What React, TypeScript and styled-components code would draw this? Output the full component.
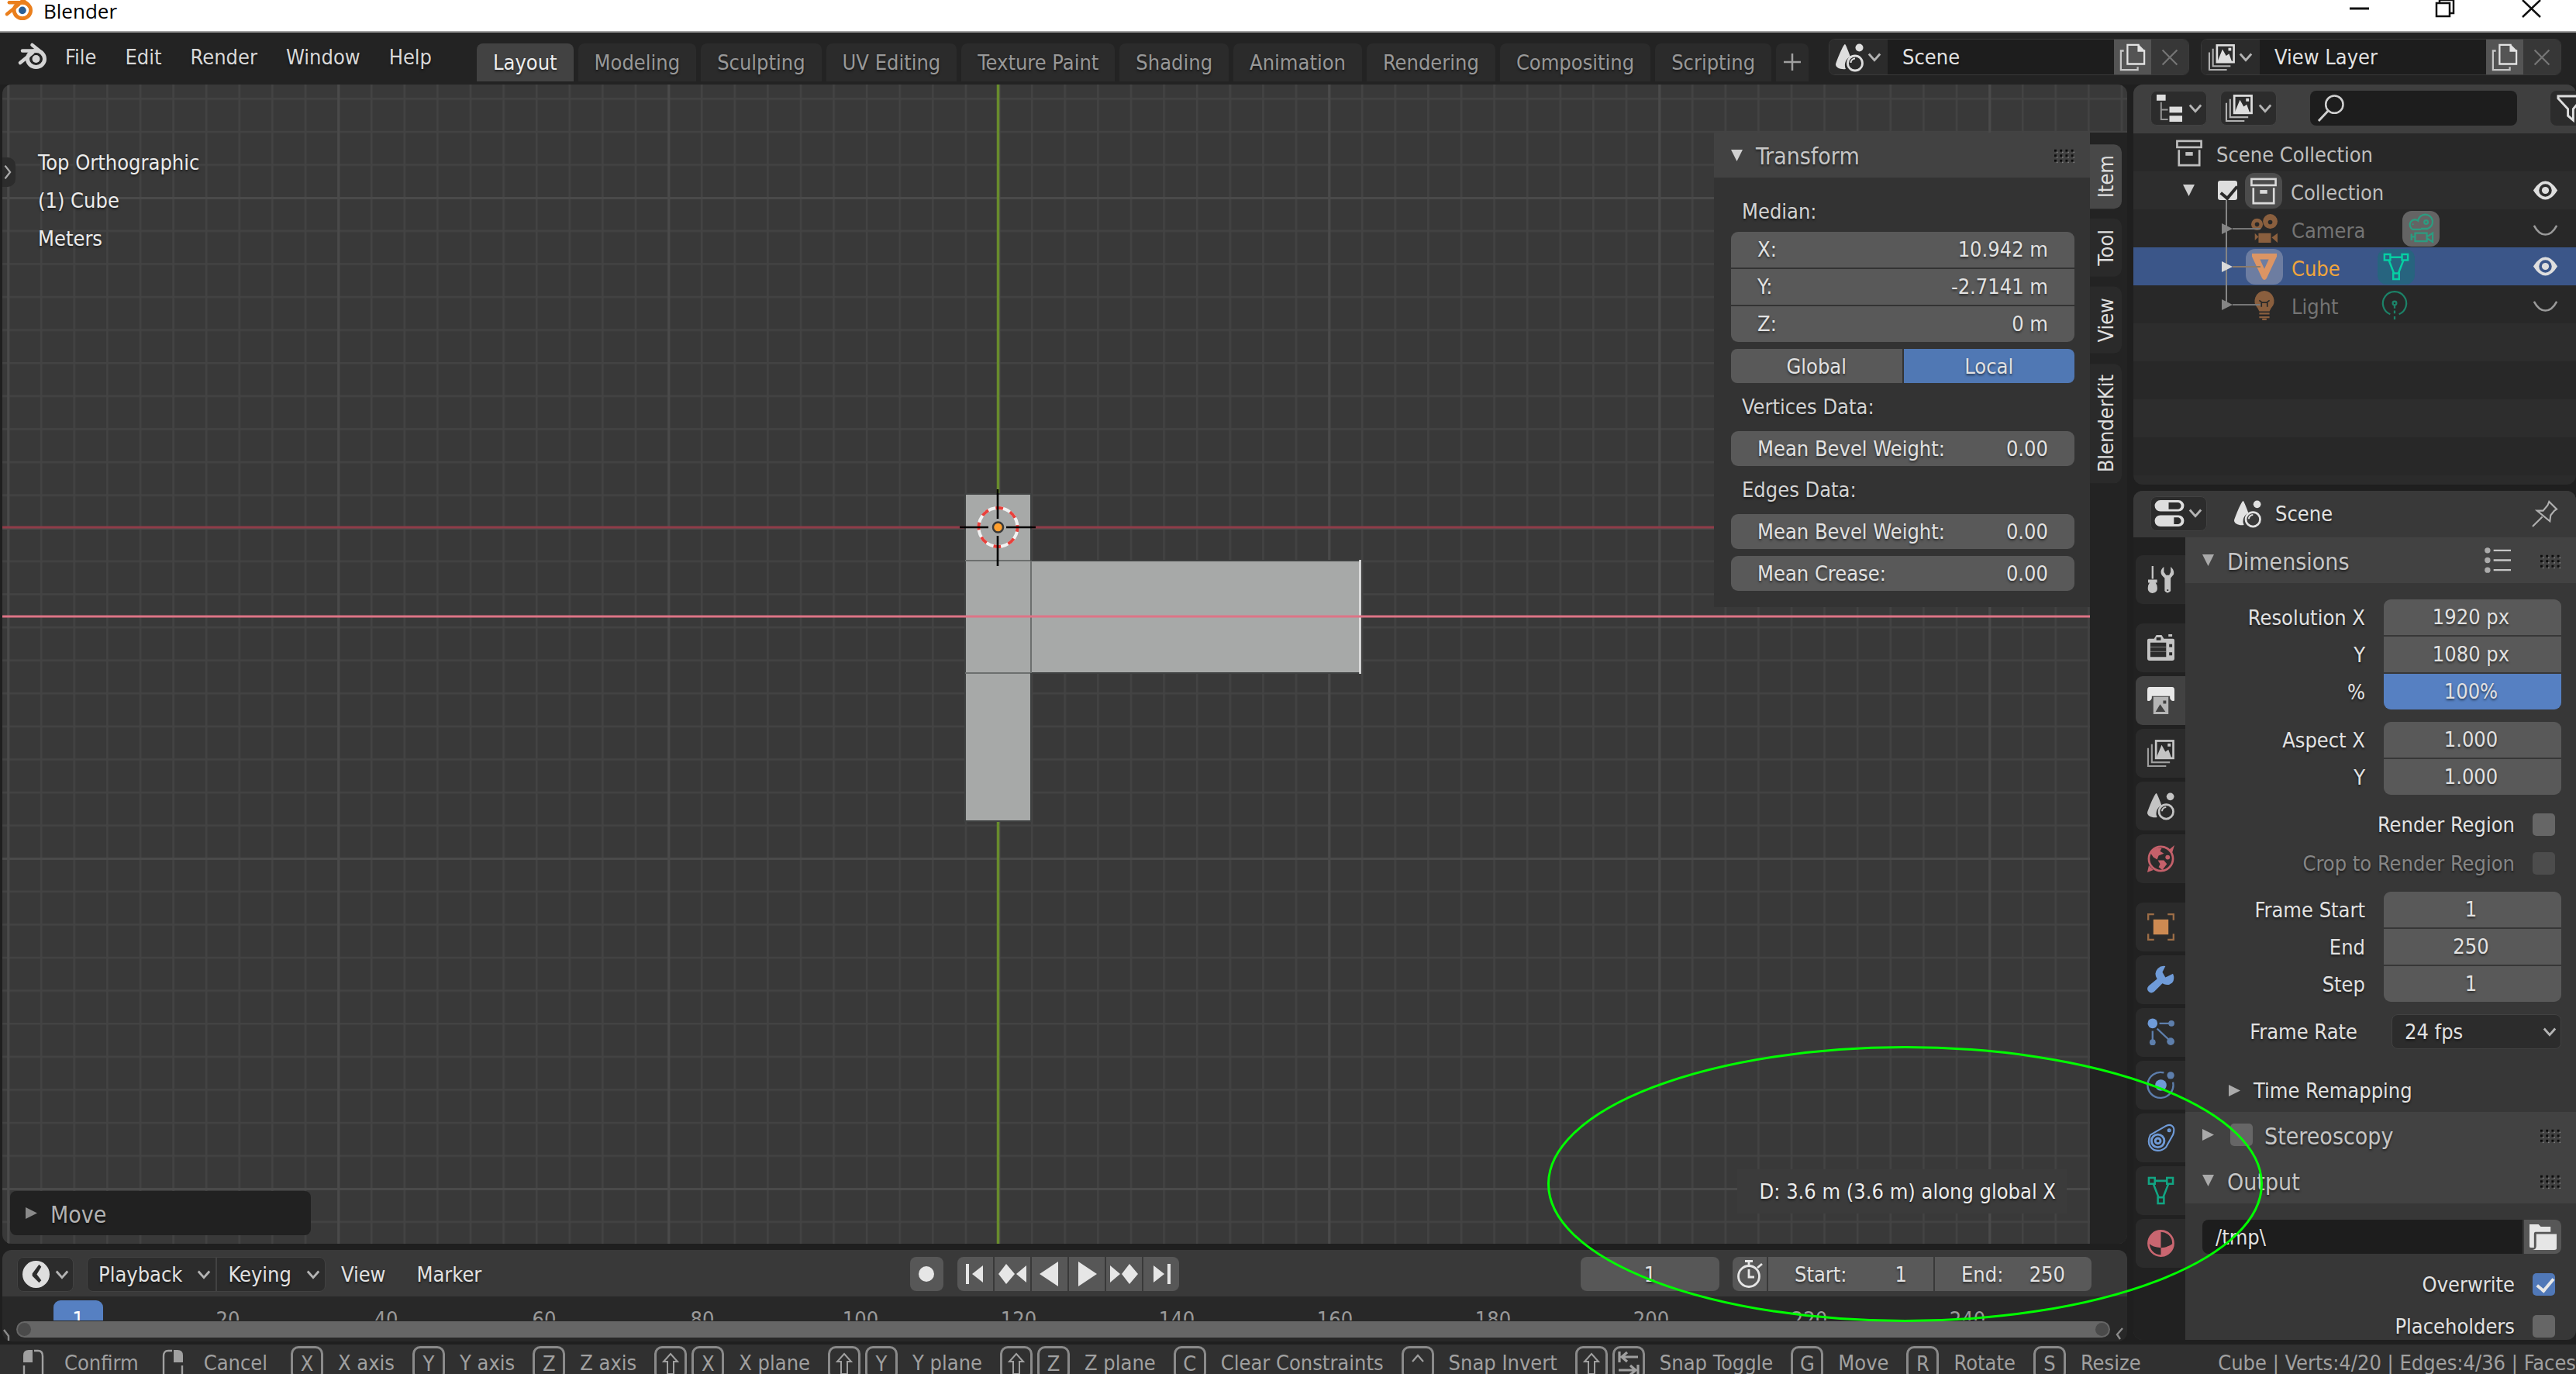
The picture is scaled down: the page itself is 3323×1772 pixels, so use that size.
import React from "react";
import styled, { createGlobalStyle, css } from "styled-components";

const Global = createGlobalStyle`
  * { box-sizing: border-box; }
  body { margin: 0; background: #232323; }
  body, button, input, select {
    font-family: "DejaVu Sans Condensed", "DejaVu Sans", sans-serif;
    font-size: 27px;
    color: #e2e2e2;
  }
  button { border: 0; padding: 0; margin: 0; background: none; }
  ul { list-style: none; margin: 0; padding: 0; }
`;

const textShadow = css`
  text-shadow: 0 2px 3px rgba(0, 0, 0, 0.55);
`;

/* ---------- Icons ---------- */

const Svg = styled.svg<{ $size?: number }>`
  width: ${(p) => p.$size ?? 36}px;
  height: ${(p) => p.$size ?? 36}px;
  flex: none;
  display: block;
  overflow: visible;
  fill: currentColor;
`;

type IconProps = { size?: number };
const icon = (body: React.ReactNode) =>
  function Icon({ size }: IconProps) {
    return (
      <Svg viewBox="0 0 36 36" $size={size} aria-hidden="true">
        {body}
      </Svg>
    );
  };
const line = { fill: "none", stroke: "currentColor", strokeWidth: 2.4 } as const;

const Logo = ({ size = 38, pupil }: { size?: number; pupil?: string }) => (
  <Svg viewBox="0 0 38 38" $size={size} aria-hidden="true">
    <g fill="none" stroke="currentColor" strokeLinecap="round">
      <ellipse cx="23.500" cy="22" rx="11" ry="10.500" strokeWidth="5" />
      <path d="M18.500 4 L31 14" strokeWidth="4.500" />
      <path d="M6 11.500 H24" strokeWidth="4.500" />
      <path d="M3 27 L19 14" strokeWidth="4.500" />
    </g>
    <circle cx="23.500" cy="22" r="5" fill={pupil ?? "currentColor"} />
  </Svg>
);
const SceneIcon = icon(
  <>
    <path d="M12 1 C13 1 17 12 19 17 A12 12 0 0 0 13 33 C6 34 0 31 0 27 C2 20 10 1 12 1Z" />
    <circle cx="30.500" cy="5.500" r="5" />
    <circle cx="25" cy="25.500" r="9.500" {...line} strokeWidth={2.800} />
    <path d="M19.500 25 A5.500 5.500 0 0 1 25 19.500" {...line} strokeWidth={2} />
  </>
);
const LayersIcon = icon(
  <>
    <path d="M1 11 V35 H25 M6 6 V30 H30" {...line} strokeWidth={2.200} opacity={0.75} />
    <rect x="11.500" y="1.500" width="23" height="23" {...line} strokeWidth={2.800} />
    <path d="M12 24 L19 7 L24 16 L28 13 L32 24Z" />
    <rect x="27" y="5" width="4" height="4" />
  </>
);
const CopyIcon = icon(
  <>
    <path d="M11 1 H26 V9 H34 V27 H11Z" {...line} />
    <path d="M26 0 L35 9 H26Z" />
    <path d="M6 9 H2 V35 H25 V31" {...line} opacity={0.8} />
  </>
);
const CrossIcon = icon(<path d="M8 8 L28 28 M28 8 L8 28" {...line} />);
const TreeIcon = icon(
  <>
    <rect x="1" y="0" width="12" height="8" />
    <path d="M7 10 V33 H16 M7 20 H16" {...line} strokeWidth={2} opacity={0.6} />
    <rect x="18" y="16" width="17" height="8" />
    <rect x="18" y="28" width="17" height="8" />
  </>
);
const SearchIcon = icon(
  <>
    <circle cx="23" cy="13" r="11.500" {...line} strokeWidth={2.600} />
    <path d="M15 21 L2 35" {...line} strokeWidth={3} />
  </>
);
const FilterIcon = icon(<path d="M2 2 H34 V5 L22 19 V34 L15 28 V19 L2 5Z" {...line} strokeWidth={3} />);
const BoxIcon = icon(
  <>
    <rect x="1.500" y="2" width="33" height="8.500" {...line} strokeWidth={2.800} />
    <path d="M4 14 V35 H32 V14" {...line} strokeWidth={2.800} />
    <rect x="13" y="17" width="10" height="5" />
  </>
);
const CameraIcon = icon(
  <>
    <path fillRule="evenodd" d="M26 -2a10 10 0 1 1 0 20a10 10 0 1 1 0-20Z M26 6a3 3 0 1 0 0 6a3 3 0 1 0 0-6Z M8 4a8 8 0 1 1 0 16a8 8 0 1 1 0-16Z M8 9a3 3 0 1 0 0 6a3 3 0 1 0 0-6Z" />
    <path d="M10 24 H27 V37 H10Z M28 30 L36 24 V37Z M5 24 L10 29 L5 34Z" />
  </>
);
const CameraDataIcon = icon(
  <>
    <path d="M18 19 H7 A7 7 0 1 1 14 7 A10 10 0 1 1 27 18 H18" {...line} />
    <circle cx="25" cy="9" r="2.500" {...line} />
    <circle cx="7" cy="12" r="1.200" />
    <path d="M10 24 H26 V35 H10Z M26 29 L34 24 V36 L26 31 M5 25 V34 M5 29 H10" {...line} />
  </>
);
const MeshIcon = icon(<path fillRule="evenodd" d="M1 0 H35 V4 L21 34 Q18 38 15 34 L1 4Z M12 8 L18 21 L24 8Z" />);
const MeshDataIcon = icon(
  <g {...line} strokeWidth={2.600}>
    <rect x="2" y="1" width="8" height="8" />
    <rect x="26" y="1" width="8" height="8" />
    <rect x="14" y="27" width="8" height="8" />
    <path d="M10 5 H26 M8 9 L15 27 M28 9 L21 27" />
  </g>
);
const BulbIcon = icon(
  <>
    <path d="M18 -1 A14 14 0 0 1 27 23 L25 27 H11 L9 23 A14 14 0 0 1 18 -1Z" />
    <path d="M11 12 L15 15 H21 L25 12 M14 15 V21 M22 15 V21" {...line} stroke="#282828" strokeWidth={1.800} />
    <path d="M11 30 H25 M11 35 H25 M15 38 H21" {...line} />
  </>
);
const BulbDataIcon = icon(
  <>
    <path d="M12 31 A16 16 0 1 1 24 31" {...line} />
    <circle cx="18" cy="16" r="2.500" {...line} />
    <path d="M18 19 V23 M18 26 V30 M18 34 V38" {...line} />
  </>
);
const EyeIcon = icon(
  <>
    <path fillRule="evenodd" d="M1 18 Q9 5 18 5 Q27 5 35 18 Q27 31 18 31 Q9 31 1 18Z M18 9a9 9 0 1 0 0 18a9 9 0 1 0 0-18Z" />
    <circle cx="18" cy="18" r="5" />
  </>
);
const EyeClosedIcon = icon(<path d="M2 14 C11 31 25 31 34 14" {...line} strokeWidth={2.800} />);
const TogglesIcon = icon(
  <>
    <path fillRule="evenodd" d="M6 0 H30 A6 6 0 0 1 30 15 H6 A6 6 0 0 1 6 0Z M17 3 V12 H29 A4.500 4.500 0 0 0 29 3Z" />
    <path fillRule="evenodd" d="M6 20 H30 A6 6 0 0 1 30 35 H6 A6 6 0 0 1 6 20Z M24 23 V32 H29 A4.500 4.500 0 0 0 29 23Z" />
  </>
);
const PinIcon = icon(
  <path d="M24 2 L34 12 L31 14 L26 20 L25 28 L8 14 L16 14 L22 7Z M15 22 L2 35" {...line} stroke="#b0b0b0" strokeWidth={2.200} />
);
const ToolsIcon = icon(
  <>
    <path d="M7 0 V17" {...line} />
    <path d="M1 18 H13 V22 H11 Q14 26 13 32 Q11 36 7 36 Q3 36 1 32 Q0 26 3 22 H1Z" />
    <path fillRule="evenodd" d="M22 1 V8 L25 12 H29 L31 8 V1 Q36 5 35 11 L31 16 V33 Q27 38 23 33 V16 Q18 12 18 8 Q18 4 22 1Z M26 31 h2 v2 h-2Z" />
  </>
);
const RenderIcon = icon(
  <>
    <path fillRule="evenodd" d="M2 6 H9 L12 1 H19 L22 6 H34 Q36 6 36 8 V32 Q36 35 33 35 H3 Q0 35 0 32 V8 Q0 6 2 6Z M4 11 V30 H25 V11Z M12 4 V8 H18 V4Z M29 13 v4 h4 v-4Z M29 24 v4 h4 v-4Z" />
    <path d="M4 17 H25 M4 23 H25" {...line} strokeWidth={1.500} opacity={0.4} />
    <rect x="28" y="0" width="5" height="3" />
  </>
);
const PrinterIcon = icon(
  <>
    <path d="M3 0 H33 Q36 0 36 4 V18 Q32 20 30 15 V12 H6 V15 Q4 20 0 18 V4 Q0 0 3 0Z" fill="#e8e8e8" />
    <path fillRule="evenodd" d="M8 13 H28 V36 H8Z M11 33 H24 L17 23Z M21 18 v4 h4 v-4Z" fill="#b5b5b5" />
  </>
);
const WorldIcon = icon(
  <>
    <circle cx="18" cy="18" r="16" {...line} strokeWidth={2.800} />
    <path d="M4 10 Q10 2 19 4 L17 8 L22 11 L15 14 L13 19 L8 16Z M14 20 L22 20 L26 25 L20 33 L15 29 L17 25Z M29 6 L36 0 L33 10Z M0 36 L2 27 L8 33Z" />
    <circle cx="27" cy="16" r="3" />
  </>
);
const ObjectIcon = icon(
  <>
    <rect x="8" y="8" width="20" height="20" />
    <path d="M1.200 9 V1.200 H9 M27 1.200 H34.800 V9 M34.800 27 V34.800 H27 M9 34.800 H1.200 V27" {...line} opacity={0.7} />
  </>
);
const WrenchIcon = icon(
  <path d="M24 0 L20 8 L24 15 L34 10 Q37 17 33 22 Q27 27 20 23 L9 34 Q5 37 2 34 Q-2 30 2 26 L13 17 Q8 9 14 3 Q18 -1 24 0Z" />
);
const ParticlesIcon = icon(
  <>
    <circle cx="7" cy="6" r="6.500" />
    <g opacity={0.75}>
      <circle cx="32" cy="6" r="4" />
      <circle cx="31" cy="30" r="5" />
      <circle cx="7" cy="31" r="4" />
      <path d="M16 6 H32 M7 16 V31 M13 13 L31 30" {...line} />
    </g>
  </>
);
const PhysicsIcon = icon(
  <>
    <circle cx="18" cy="18" r="7.500" />
    <circle cx="31" cy="5" r="4.800" opacity={0.75} />
    <path d="M22 1.500 A17 17 0 1 0 34 14" {...line} opacity={0.75} />
  </>
);
const ConstraintIcon = icon(
  <g {...line} strokeWidth={2.200}>
    <path d="M4 14 L25 2 Q32 -1 35 5 Q36 9 34 14 L25 30 Q18 37 9 34 Q-2 27 4 14Z" />
    <circle cx="14" cy="22" r="8.500" strokeWidth={3} />
    <circle cx="14" cy="22" r="3.500" strokeWidth={3} />
    <circle cx="29" cy="8" r="1.500" />
  </g>
);
const MaterialIcon = icon(
  <>
    <circle cx="18" cy="18" r="16.500" {...line} strokeWidth={2.800} />
    <path d="M18 1 V24 Q7 23 2 18 Q3 3 18 1Z M18 24 Q29 23 34 18 Q33 33 18 35Z" />
  </>
);
const PresetIcon = icon(
  <>
    <circle cx="4" cy="5" r="3.800" opacity={0.8} />
    <circle cx="4" cy="18" r="3.800" opacity={0.8} />
    <circle cx="4" cy="31" r="3.800" opacity={0.8} />
    <path d="M12 5 H35 M12 18 H35 M12 31 H35" {...line} />
  </>
);
const FolderIcon = icon(
  <>
    <path d="M0 1 H12 L15 4 H28 V11 H8 Q6 11 6 14 V32 H2 Q0 32 0 30Z" />
    <path d="M9 14 H36 V33 Q36 35 33 35 H4 Q9 34 9 30Z" />
  </>
);
const ClockIcon = icon(
  <path fillRule="evenodd" d="M18 0a18 18 0 1 1 0 36a18 18 0 1 1 0-36Z M22 5 L13 17 V20 L22 29 L25 26 L19 18 L25 8Z" />
);
const StopwatchIcon = icon(
  <>
    <circle cx="17" cy="21" r="13.500" {...line} strokeWidth={2.800} />
    <path d="M12 1.500 H22 M17 1 V8 M17 12 V22 H24 M28 10 L34 5" {...line} strokeWidth={2.800} />
  </>
);
const RecordIcon = icon(<circle cx="18" cy="18" r="10" />);
const FirstIcon = icon(<path d="M6 5 H10 V31 H6Z M28 7 V29 L14 18Z" />);
const PrevKeyIcon = icon(<path d="M0 18 L10 5 L21 18 L10 31Z M36 7 V29 L23 18Z" />);
const PlayBackIcon = icon(<path d="M29 2 V34 L5 18Z" />);
const PlayIcon = icon(<path d="M7 2 V34 L31 18Z" />);
const NextKeyIcon = icon(<path d="M0 7 V29 L13 18Z M15 18 L25 5 L36 18 L25 31Z" />);
const LastIcon = icon(<path d="M8 7 V29 L22 18Z M26 5 H30 V31 H26Z" />);
const ShiftIcon = icon(<path d="M18 6 L27 16 H22 V32 H14 V16 H9Z" {...line} strokeWidth={2} />);
const TabIcon = icon(
  <path d="M6 3 V17 M30 10 H9 M16 4 L9 10 L16 16 M30 20 V34 M5 27 H27 M20 21 L27 27 L20 33" {...line} strokeWidth={3.200} />
);
const CaretIcon = icon(<path d="M11 16 L18 8 L25 16" {...line} strokeWidth={2.200} />);

const Chevron = () => (
  <Svg viewBox="0 0 20 20" $size={18} aria-hidden="true">
    <path d="M2 5 L10 14 L18 5" fill="none" stroke="#b4b4b4" strokeWidth="3.200" />
  </Svg>
);
const Triangle = ({ open = false, color = "#aaaaaa" }) => (
  <Svg viewBox="0 0 16 16" $size={15} aria-hidden="true">
    <path d={open ? "M0 0 H16 L8 16Z" : "M0 0 L16 8 L0 16Z"} fill={color} />
  </Svg>
);
const Grip = () => (
  <Svg viewBox="0 0 36 36" $size={26} aria-hidden="true">
    {[8, 17, 26].map((y) =>
      [0, 10, 20, 30].map((x) => (
        <g key={`${x}-${y}`}>
          <rect x={x} y={y} width="4" height="4" fill="#0c0c0c" />
          <rect x={x + 4} y={y + 4} width="2" height="2" fill="#8a8a8a" />
        </g>
      ))
    )}
  </Svg>
);
const Mouse = ({ side }: { side: "left" | "right" }) => (
  <Svg viewBox="6 0 40 40" $size={40} aria-hidden="true">
    <g transform="translate(6 0)">
      <path d="M2 22 V34 Q2 40 8 40 H20 Q26 40 26 34 V22" {...line} />
      {side === "left" ? (
        <path d="M1 18 V9 Q1 2 8 2 H13 V18Z" />
      ) : (
        <path d="M27 18 V9 Q27 2 20 2 H15 V18Z" />
      )}
      <path d={side === "left" ? "M15 3 H20 Q26 3 26 10 V22" : "M13 3 H8 Q2 3 2 10 V22"} {...line} />
    </g>
  </Svg>
);

/* ---------- Frame ---------- */

const Page = styled.div`
  position: relative;
  display: flex;
  flex-direction: column;
  height: 100vh;
  overflow: hidden;
  background: #1f1f1f;
`;

const TitleBar = styled.header`
  display: flex;
  align-items: flex-start;
  height: 42px;
  background: #fff;
  border-bottom: 2px solid #a0a0a0;
  color: #000;
`;
const AppIcon = styled.span`
  display: flex;
  margin: -8px 13px 0 6px;
  color: #ea7f1d;
`;
const AppName = styled.span`
  font-family: "Open Sans", "Noto Sans", sans-serif;
  font-size: 26px;
  line-height: 28px;
`;
const WindowButtons = styled.div`
  display: flex;
  gap: 81px;
  margin-left: auto;
  padding-right: 43px;
`;
const WindowButton = styled.button`
  display: flex;
  color: #111;
`;

const TopBar = styled.nav`
  display: flex;
  height: 67px;
  padding: 8px 19px 0 23px;
  background: #232323;
  align-items: flex-start;
`;
const LogoButton = styled.button`
  display: flex;
  align-items: center;
  height: 46px;
  color: #d4d4d4;
  margin-right: 23px;
`;
const MenuButton = styled.button`
  ${textShadow}
  line-height: 47px;
  margin-right: 37px;
  color: #d8d8d8;
`;
const Tabs = styled.div`
  display: flex;
  gap: 6px;
  margin: 6px auto 0 21px;
`;
const Tab = styled.button<{ $active?: boolean }>`
  ${textShadow}
  height: 49px;
  padding: 0 21px;
  border-radius: 8px 8px 0 0;
  background: ${(p) => (p.$active ? "#424242" : "#2b2b2b")};
  color: ${(p) => (p.$active ? "#eeeeee" : "#989898")};
  white-space: nowrap;
`;
const AddTab = styled(Tab)`
  padding: 0 6px;
`;
const IdBlock = styled.div`
  display: flex;
  width: 465px;
  height: 47px;
  margin-left: 15px;
  border: 1px solid #3a3a3a;
  border-radius: 8px;
  overflow: hidden;
`;
const IdPicker = styled.button`
  display: flex;
  align-items: center;
  justify-content: center;
  gap: 5px;
  width: 75px;
  background: #2b2b2b;
  color: #dedede;
`;
const IdName = styled.input`
  ${textShadow}
  flex: 1;
  min-width: 0;
  border: 0;
  padding: 0 19px;
  background: #1d1d1d;
`;
const IdAction = styled.button<{ $dim?: boolean }>`
  display: flex;
  align-items: center;
  justify-content: center;
  width: 48px;
  background: ${(p) => (p.$dim ? "#373737" : "#545454")};
  color: ${(p) => (p.$dim ? "#757575" : "#e2e2e2")};
`;

const Workspace = styled.main`
  display: grid;
  grid-template-columns: minmax(0, 1fr) 571px;
  gap: 8px;
  flex: 1;
  min-height: 0;
  margin-bottom: 4px;
`;
const Column = styled.div`
  display: flex;
  flex-direction: column;
  gap: 8px;
  min-height: 0;
  min-width: 0;
`;

/* ---------- Viewport ---------- */

const Viewport = styled.section`
  position: relative;
  display: flex;
  flex: 1;
  min-height: 0;
  padding-top: 62px;
  margin-left: 3px;
  border-radius: 12px;
  overflow: hidden;
  background: #393939;
`;
const Canvas = styled.svg`
  position: absolute;
  inset: 0;
  width: 100%;
  height: 100%;
`;
const ViewInfo = styled.div`
  ${textShadow}
  position: relative;
  flex: 1;
  padding: 14px 0 0 46px;
  line-height: 49px;
  color: #ececec;
`;
const RegionToggle = styled.button`
  position: absolute;
  left: -3px;
  top: 94px;
  width: 20px;
  height: 38px;
  background: #2c2c2c;
  border-radius: 0 10px 10px 0;
`;
const SidePanel = styled.aside`
  position: relative;
  align-self: flex-start;
  width: 485px;
  background: #333333;
`;
const PanelHeader = styled.div<{ $height?: number }>`
  ${textShadow}
  display: flex;
  align-items: center;
  height: ${(p) => p.$height ?? 59}px;
  padding: 0 20px 0 22px;
  background: #424242;
  font-size: 30px;
  color: #c6c6c6;
`;
const PanelTitle = styled.span`
  margin-left: 17px;
  padding-top: 3px;
`;
const Spacer = styled.span`
  flex: 1;
`;
const SideBody = styled.div`
  padding: 18px 20px 21px 22px;
`;
const GroupLabel = styled.div<{ $height?: number }>`
  ${textShadow}
  padding-left: 14px;
  line-height: ${(p) => p.$height ?? 62}px;
  color: #d4d4d4;
`;
const Stack = styled.div`
  display: grid;
  gap: 2px;
  border-radius: 9px;
  overflow: hidden;
`;
const NumberField = styled.label<{ $height?: number; $gap?: number }>`
  ${textShadow}
  display: flex;
  align-items: center;
  height: ${(p) => p.$height ?? 46}px;
  padding: 0 34px 2px;
  background: #595959;
  white-space: nowrap;
`;
const RoundField = styled(NumberField)`
  height: 45px;
  padding: 0 34px;
  border-radius: 9px;
  margin-bottom: ${(p) => p.$gap ?? 0}px;
`;
const BareInput = styled.input<{ $align?: string }>`
  ${textShadow}
  flex: 1;
  min-width: 0;
  width: 100%;
  height: 100%;
  border: 0;
  padding: 0;
  background: none;
  text-align: ${(p) => p.$align ?? "right"};
`;
const Segmented = styled.div`
  display: grid;
  grid-template-columns: 1fr 1fr;
  gap: 2px;
  margin-top: 9px;
  border-radius: 8px;
  overflow: hidden;
`;
const Segment = styled.button<{ $active?: boolean }>`
  ${textShadow}
  height: 44px;
  background: ${(p) => (p.$active ? "#5078b4" : "#595959")};
`;
const SideTabs = styled.div`
  position: relative;
  display: flex;
  flex-direction: column;
  gap: 13px;
  width: 48px;
  padding: 15px 7px 0 0;
  background: #232323;
`;
const SideTab = styled.button<{ $active?: boolean }>`
  writing-mode: vertical-rl;
  rotate: 180deg;
  padding: 14px 0;
  line-height: 41px;
  border-radius: 10px 0 0 10px;
  background: ${(p) => (p.$active ? "#484848" : "#2a2a2a")};
  color: #dedede;
`;
const LastOperator = styled.button`
  ${textShadow}
  position: absolute;
  left: 10px;
  bottom: 11px;
  display: flex;
  align-items: center;
  width: 388px;
  height: 57px;
  padding-left: 20px;
  background: #212121;
  border-radius: 8px;
  font-size: 30px;
  color: #b2b2b2;
`;
const TransformTip = styled.div`
  ${textShadow}
  position: absolute;
  right: 78px;
  bottom: 39px;
  padding: 0 14px 0 29px;
  line-height: 57px;
  background: #3b3b3b;
  color: #ececec;
  white-space: nowrap;
`;

/* ---------- Timeline ---------- */

const Timeline = styled.section`
  height: 118px;
  margin-left: 3px;
  border-radius: 12px;
  overflow: hidden;
  background: #282828;
`;
const TimelineHeader = styled.div`
  display: grid;
  grid-template-columns: 1fr auto 1fr;
  height: 60px;
  padding: 9px 46px 0 19px;
  background: #393939;
`;
const HeaderGroup = styled.div<{ $end?: boolean }>`
  display: flex;
  justify-content: ${(p) => (p.$end ? "flex-end" : "flex-start")};
`;
const DarkButton = styled.button<{ $width: number; $ml?: number }>`
  ${textShadow}
  display: flex;
  align-items: center;
  justify-content: center;
  gap: 7px;
  width: ${(p) => p.$width}px;
  height: 45px;
  margin-left: ${(p) => p.$ml ?? 0}px;
  border: 1px solid #424242;
  border-radius: 8px;
  background: #2c2c2c;
  color: #dedede;
  flex: none;
`;
const MenuPair = styled.div`
  display: flex;
  margin-left: 17px;
  border: 1px solid #424242;
  border-radius: 8px;
  overflow: hidden;
  background: #424242;
  height: 45px;
  gap: 2px;
`;
const PairButton = styled.button`
  ${textShadow}
  display: flex;
  align-items: center;
  gap: 19px;
  padding: 0 6px 0 14px;
  background: #2c2c2c;
`;
const PlainMenu = styled.button`
  ${textShadow}
  height: 45px;
  margin-left: 20px;
  margin-right: 20px;
`;
const Transport = styled.div`
  display: flex;
  gap: 18px;
  margin-right: 26px;
`;
const ButtonStrip = styled.div`
  display: flex;
  gap: 2px;
  height: 44px;
  border-radius: 8px;
  overflow: hidden;
`;
const StripButton = styled.button<{ $width?: number }>`
  display: flex;
  align-items: center;
  justify-content: center;
  width: ${(p) => p.$width ?? 46}px;
  background: #575757;
  color: #e6e6e6;
`;
const FrameField = styled(NumberField)<{ $width: number }>`
  width: ${(p) => p.$width}px;
  height: 44px;
  padding: 0 34px;
`;
const CurrentFrame = styled.input`
  ${textShadow}
  width: 179px;
  height: 44px;
  margin-right: 17px;
  border: 0;
  border-radius: 8px;
  background: #575757;
  text-align: center;
`;
const Ruler = styled.div`
  position: relative;
  display: grid;
  grid-template-columns: repeat(12, 1fr);
  height: 31px;
  padding: 10px 104px 0 189px;
  overflow: hidden;
  line-height: 40px;
  text-align: center;
  color: #9a9a9a;
`;
const Playhead = styled.div`
  position: absolute;
  left: 66px;
  top: 5px;
  width: 64px;
  height: 40px;
  border-radius: 9px;
  background: #5680c2;
  color: #fff;
  line-height: 50px;
`;
const ScrollArea = styled.div`
  display: flex;
  align-items: center;
  justify-content: space-between;
  color: #8a8a8a;
`;
const ScrollTrack = styled.div`
  display: flex;
  flex: 1;
  align-items: center;
  justify-content: space-between;
  height: 21px;
  padding: 0 2px;
  border-radius: 11px;
  background: #666666;
`;
const Knob = styled.span`
  width: 17px;
  height: 17px;
  border-radius: 50%;
  background: #4a4a4a;
`;

/* ---------- Outliner ---------- */

const Outliner = styled.section`
  height: 516px;
  border-radius: 12px;
  overflow: hidden;
  background: #2b2b2b;
`;
const EditorHeader = styled.div<{ $height: number }>`
  ${textShadow}
  display: flex;
  align-items: center;
  height: ${(p) => p.$height}px;
  padding: 0 0 2px 22px;
  background: #393939;
`;
const OutlinerHeader = styled(EditorHeader)`
  background: #3f3f3f;
  padding-bottom: 2px;
`;
const SearchBox = styled.label`
  display: flex;
  align-items: center;
  width: 267px;
  height: 45px;
  margin-left: 43px;
  padding-left: 9px;
  border-radius: 8px;
  background: #1d1d1d;
  color: #d0d0d0;
`;
const FilterButton = styled.button`
  display: flex;
  flex: 1;
  align-items: center;
  height: 45px;
  margin-left: 43px;
  padding-left: 8px;
  border-radius: 8px 0 0 8px;
  background: #2c2c2c;
  color: #dedede;
  overflow: hidden;
`;
const TreeList = styled.ul`
  li:nth-child(odd) { background: #282828; }
  li:nth-child(even) { background: #2d2d2d; }
  li[aria-selected="true"] { background: #3b5689; }
`;
const TreeRow = styled.li<{ $indent: number; $dim?: boolean }>`
  display: flex;
  align-items: center;
  height: 49px;
  padding: 0 23px 0 ${(p) => p.$indent}px;
  color: ${(p) => (p.$dim ? "#747474" : "#bebebe")};
`;
const TreeIconBox = styled.span<{ $bg?: string; $color?: string; $ml?: number }>`
  display: flex;
  align-items: center;
  justify-content: center;
  width: 48px;
  height: 46px;
  margin-left: ${(p) => p.$ml ?? 0}px;
  border-radius: 12px;
  background: ${(p) => p.$bg ?? "transparent"};
  color: ${(p) => p.$color ?? "#dadada"};
`;
const TreeCheck = styled.label`
  display: flex;
  justify-content: center;
  width: 46px;
  margin-left: 19px;
`;
const TreeName = styled.span<{ $ml?: number; $active?: boolean }>`
  margin-left: ${(p) => p.$ml ?? 11}px;
  padding-top: 5px;
  ${(p) => p.$active && "color: #f0a53c;"}
`;
const VisibilityButton = styled.button<{ $dim?: boolean }>`
  display: flex;
  margin-left: auto;
  color: ${(p) => (p.$dim ? "#9a9a9a" : "#dedede")};
`;
const BranchSvg = styled.svg`
  flex: none;
  width: 31px;
  height: 49px;
  overflow: visible;
  position: relative;
`;
const Branch = ({ first = false, last = false, bright = false }) => (
  <BranchSvg aria-hidden="true">
    <path d={`M6 ${first ? -12 : 0} V${last ? 25 : 49}`} stroke="#858585" strokeWidth="2" />
    <path d="M14 25 H50" stroke={bright ? "#8a7a6a" : "#777777"} strokeWidth="2" />
    <path d="M0 18 L14 25 L0 32Z" fill={bright ? "#dadada" : "#858585"} />
  </BranchSvg>
);

/* ---------- Properties ---------- */

const Properties = styled.section`
  display: flex;
  flex-direction: column;
  flex: 1;
  min-height: 0;
  margin-bottom: 2px;
  border-radius: 12px;
  overflow: hidden;
  background: #373737;
`;
const PropertiesBody = styled.div`
  display: flex;
  flex: 1;
  min-height: 0;
`;
const PropertyTabs = styled.div`
  display: flex;
  flex-direction: column;
  gap: 5px;
  width: 67px;
  padding: 23px 0 0 3px;
  background: #212121;
`;
const PropertyTab = styled.button<{ $color: string; $active?: boolean; $gap?: boolean }>`
  display: flex;
  align-items: center;
  justify-content: center;
  height: 63px;
  flex: none;
  margin-top: ${(p) => (p.$gap ? 20 : 0)}px;
  border-radius: 9px 0 0 9px;
  background: ${(p) => (p.$active ? "#424242" : "#2b2b2b")};
  color: ${(p) => p.$color};
`;
const PropertyContent = styled.div`
  flex: 1;
  min-width: 0;
  overflow: hidden;
`;
const PropertySection = styled.div`
  padding: 21px 19px 0 22px;
`;
const PropGroup = styled.div<{ $gap: number; $before?: number }>`
  display: grid;
  gap: 2px;
  margin-top: ${(p) => p.$before ?? 0}px;
  margin-bottom: ${(p) => p.$gap}px;
`;
const PropRow = styled.div<{ $narrow?: boolean }>`
  ${textShadow}
  display: grid;
  grid-template-columns: 1fr ${(p) => (p.$narrow ? "219px" : "229px")};
  gap: ${(p) => (p.$narrow ? 44 : 24)}px;
  align-items: center;
  text-align: right;
`;
const PropInput = styled.input<{ $edge?: "top" | "bottom"; $blue?: boolean }>`
  ${textShadow}
  width: 100%;
  height: 46px;
  border: 0;
  padding: 0 4px 2px 0;
  text-align: center;
  background: ${(p) => (p.$blue ? "#5680c2" : "#595959")};
  border-radius: ${(p) => (p.$edge === "top" ? "9px 9px 0 0" : p.$edge === "bottom" ? "0 0 9px 9px" : "0")};
`;
const CheckRow = styled.label<{ $height: number; $dim?: boolean }>`
  ${textShadow}
  display: flex;
  align-items: center;
  justify-content: flex-end;
  gap: 23px;
  height: ${(p) => p.$height}px;
  padding-right: 8px;
  color: ${(p) => (p.$dim ? "#868686" : "#e2e2e2")};
`;
const CheckBox = styled.input<{ $light?: boolean }>`
  appearance: none;
  position: relative;
  flex: none;
  width: ${(p) => (p.$light ? 25 : 29)}px;
  height: ${(p) => (p.$light ? 25 : 29)}px;
  margin: 0;
  border-radius: ${(p) => (p.$light ? 3 : 5)}px;
  background: #666666;
  &:disabled { background: #4c4c4c; }
  &:checked { background: ${(p) => (p.$light ? "#dedede" : "#5078b8")}; }
  &:checked::after {
    content: "";
    position: absolute;
    left: ${(p) => (p.$light ? 8 : 10)}px;
    top: 2px;
    width: 9px;
    height: 18px;
    border: solid ${(p) => (p.$light ? "#2a2a2a" : "#e8e8e8")};
    border-width: 0 4px 4px 0;
    rotate: 40deg;
  }
`;
const SelectWrap = styled.div`
  position: relative;
  display: flex;
  align-items: center;
`;
const Select = styled.select`
  ${textShadow}
  appearance: none;
  width: 100%;
  height: 45px;
  padding: 0 16px;
  border: 1px solid #424242;
  border-radius: 8px;
  background: #2c2c2c;
`;
const SelectArrow = styled.span`
  position: absolute;
  right: 6px;
  pointer-events: none;
`;
const SubPanel = styled.button`
  ${textShadow}
  display: flex;
  align-items: center;
  gap: 17px;
  height: 56px;
  margin-top: 25px;
  padding-left: 34px;
`;
const PathRow = styled.div`
  display: flex;
  gap: 2px;
  height: 44px;
  margin-bottom: 12px;
  border-radius: 8px;
  overflow: hidden;
`;
const PathInput = styled.input`
  ${textShadow}
  flex: 1;
  min-width: 0;
  border: 0;
  padding: 0 17px;
  background: #1d1d1d;
`;
const HeaderIcon = styled.span<{ $ml?: number; $mr?: number }>`
  display: flex;
  margin: 0 ${(p) => p.$mr ?? 0}px 0 ${(p) => p.$ml ?? 0}px;
`;

/* ---------- Status bar ---------- */

const StatusBar = styled.footer`
  display: flex;
  align-items: flex-start;
  height: 38px;
  padding: 2px 0 0 29px;
  overflow: hidden;
  background: #303030;
  color: #a0a0a0;
  white-space: nowrap;
`;
const Hint = styled.span`
  display: flex;
  align-items: flex-start;
  gap: 6px;
  margin-right: 23px;
`;
const MouseHint = styled(Hint)`
  margin-right: 30px;
`;
const HintText = styled.span`
  margin-left: 13px;
  line-height: 44px;
`;
const MouseBox = styled.span`
  display: flex;
  width: 35px;
  padding-top: 3px;
`;
const Key = styled.kbd`
  display: flex;
  align-items: center;
  justify-content: center;
  width: 42px;
  height: 44px;
  border: 3px solid #8a8a8a;
  border-radius: 10px;
  font: inherit;
`;
const Stats = styled.span`
  margin-left: auto;
  line-height: 44px;
`;
const Annotation = styled.svg`
  position: absolute;
  right: 404px;
  bottom: 67px;
  width: 923px;
  height: 356px;
  pointer-events: none;
`;

/* ---------- Data ---------- */

const workspaces = ["Modeling", "Sculpting", "UV Editing", "Texture Paint", "Shading", "Animation", "Rendering", "Compositing", "Scripting"];
const propertyTabs = [
  { name: "Tool", Icon: ToolsIcon, color: "#c4c4c4" },
  { name: "Render", Icon: RenderIcon, color: "#c4c4c4", gap: true },
  { name: "Output", Icon: PrinterIcon, color: "#e0e0e0", active: true },
  { name: "View Layer", Icon: LayersIcon, color: "#c4c4c4" },
  { name: "Scene", Icon: SceneIcon, color: "#c4c4c4" },
  { name: "World", Icon: WorldIcon, color: "#c4606a" },
  { name: "Object", Icon: ObjectIcon, color: "#cd8a52", gap: true },
  { name: "Modifiers", Icon: WrenchIcon, color: "#6f9bd8" },
  { name: "Particles", Icon: ParticlesIcon, color: "#6f9bd8" },
  { name: "Physics", Icon: PhysicsIcon, color: "#6f9bd8" },
  { name: "Constraints", Icon: ConstraintIcon, color: "#6f9bd8" },
  { name: "Mesh data", Icon: MeshDataIcon, color: "#12a583" },
  { name: "Material", Icon: MaterialIcon, color: "#c96670" },
];
const transport = [
  { name: "Jump to start", Icon: FirstIcon },
  { name: "Previous keyframe", Icon: PrevKeyIcon },
  { name: "Play backwards", Icon: PlayBackIcon },
  { name: "Play", Icon: PlayIcon },
  { name: "Next keyframe", Icon: NextKeyIcon },
  { name: "Jump to end", Icon: LastIcon },
];
const hints: { keys: React.ReactNode[]; text: string }[] = [
  { keys: ["X"], text: "X axis" },
  { keys: ["Y"], text: "Y axis" },
  { keys: ["Z"], text: "Z axis" },
  { keys: [<ShiftIcon />, "X"], text: "X plane" },
  { keys: [<ShiftIcon />, "Y"], text: "Y plane" },
  { keys: [<ShiftIcon />, "Z"], text: "Z plane" },
  { keys: ["C"], text: "Clear Constraints" },
  { keys: [<CaretIcon />], text: "Snap Invert" },
  { keys: [<ShiftIcon />, <TabIcon />], text: "Snap Toggle" },
  { keys: ["G"], text: "Move" },
  { keys: ["R"], text: "Rotate" },
  { keys: ["S"], text: "Resize" },
];

const Scene3D = () => (
  <Canvas aria-label="3D scene">
    <defs>
      <pattern id="minor" x="1284.300" y="571" width="42.600" height="42.600" patternUnits="userSpaceOnUse">
        <path d="M0 0 H42.600 M0 0 V42.600" stroke="#434343" strokeWidth="5" fill="none" />
      </pattern>
      <pattern id="major" x="1284.300" y="571" width="426" height="426" patternUnits="userSpaceOnUse">
        <path d="M0 0 H426 M0 0 V426" stroke="#4a4a4a" strokeWidth="6" fill="none" />
      </pattern>
    </defs>
    <rect width="100%" height="100%" fill="url(#minor)" />
    <rect width="100%" height="100%" fill="url(#major)" />
    <path d="M0 571 H2741" stroke="#8f3c49" strokeWidth="3" />
    <path d="M1284.500 0 V1500" stroke="#688c2c" strokeWidth="3.500" />
    <g fill="#a7a9a8" stroke="#3f4141" strokeWidth="2">
      <rect x="1242" y="528" width="85" height="422" />
      <path d="M1327 614 H1752 V759 H1327" />
      <path d="M1242 614 H1326 M1327 614 V759 M1242 759 H1326" stroke="#6c6f6e" />
    </g>
    <path d="M1751.500 613 V760" stroke="#e8e8e8" strokeWidth="2.500" />
    <path d="M0 686 H2741" stroke="#dd7486" strokeWidth="3" />
    <circle cx="1284.500" cy="571" r="25" fill="none" stroke="#f2f2f2" strokeWidth="4" />
    <circle cx="1284.500" cy="571" r="25" fill="none" stroke="#e8413c" strokeWidth="4" strokeDasharray="9.817 9.817" strokeDashoffset="4" />
    <path d="M1235 571 H1272 M1295 571 H1333 M1284 522 V560 M1284 582 V621" stroke="#000" strokeWidth="2.600" />
    <circle cx="1284.500" cy="571" r="6.500" fill="#ffa02f" stroke="#3a3a3a" strokeWidth="2.500" />
  </Canvas>
);

export default function App() {
  return (
    <Page>
      <Global />
      <TitleBar>
        <AppIcon><Logo size={37} pupil="#2a5f96" /></AppIcon>
        <AppName>Blender</AppName>
        <WindowButtons>
          <WindowButton aria-label="Minimize">
            <Svg viewBox="0 0 30 30" $size={30}><path d="M3 11 H28" stroke="#111" strokeWidth="3" /></Svg>
          </WindowButton>
          <WindowButton aria-label="Restore">
            <Svg viewBox="0 0 30 30" $size={30}>
              <path d="M4 4 H21 V21 H4Z M8 4 V0 H26 V17 H21" fill="none" stroke="#111" strokeWidth="2.500" />
            </Svg>
          </WindowButton>
          <WindowButton aria-label="Close">
            <Svg viewBox="0 0 30 30" $size={30}><path d="M4 0 L27 22 M27 0 L4 22" stroke="#111" strokeWidth="2.500" /></Svg>
          </WindowButton>
        </WindowButtons>
      </TitleBar>

      <TopBar>
        <LogoButton aria-label="Blender menu"><Logo /></LogoButton>
        {["File", "Edit", "Render", "Window", "Help"].map((m) => <MenuButton key={m}>{m}</MenuButton>)}
        <Tabs>
          <Tab $active>Layout</Tab>
          {workspaces.map((w) => <Tab key={w}>{w}</Tab>)}
          <AddTab aria-label="Add workspace">
            <Svg viewBox="0 0 30 30" $size={30}><path d="M4 14 H26 M15 3 V25" stroke="#a0a0a0" strokeWidth="2.500" /></Svg>
          </AddTab>
        </Tabs>
        <IdBlock>
          <IdPicker aria-label="Browse scene"><SceneIcon /><Chevron /></IdPicker>
          <IdName aria-label="Scene name" defaultValue="Scene" />
          <IdAction aria-label="New scene"><CopyIcon size={34} /></IdAction>
          <IdAction $dim aria-label="Delete scene"><CrossIcon size={34} /></IdAction>
        </IdBlock>
        <IdBlock>
          <IdPicker aria-label="Browse view layer"><LayersIcon size={34} /><Chevron /></IdPicker>
          <IdName aria-label="View layer name" defaultValue="View Layer" />
          <IdAction aria-label="New view layer"><CopyIcon size={34} /></IdAction>
          <IdAction $dim aria-label="Delete view layer"><CrossIcon size={34} /></IdAction>
        </IdBlock>
      </TopBar>

      <Workspace>
        <Column>
          <Viewport>
            <Scene3D />
            <ViewInfo>
              <div>Top Orthographic</div>
              <div>(1) Cube</div>
              <div>Meters</div>
            </ViewInfo>
            <RegionToggle aria-label="Show toolbar">
              <Svg viewBox="0 0 16 30" $size={28}><path d="M0 6 L7 15 L0 24" fill="none" stroke="#aaa" strokeWidth="2.500" /></Svg>
            </RegionToggle>
            <SidePanel>
              <PanelHeader $height={58}>
                <Triangle open color="#d0d0d0" />
                <PanelTitle>Transform</PanelTitle>
                <Spacer />
                <Grip />
              </PanelHeader>
              <SideBody>
                <GroupLabel $height={52}>Median:</GroupLabel>
                <Stack>
                  <NumberField>X:<BareInput defaultValue="10.942 m" /></NumberField>
                  <NumberField>Y:<BareInput defaultValue="-2.7141 m" /></NumberField>
                  <NumberField>Z:<BareInput defaultValue="0 m" /></NumberField>
                </Stack>
                <Segmented>
                  <Segment>Global</Segment>
                  <Segment $active>Local</Segment>
                </Segmented>
                <GroupLabel>Vertices Data:</GroupLabel>
                <RoundField>Mean Bevel Weight:<BareInput defaultValue="0.00" /></RoundField>
                <GroupLabel>Edges Data:</GroupLabel>
                <RoundField $gap={9}>Mean Bevel Weight:<BareInput defaultValue="0.00" /></RoundField>
                <RoundField>Mean Crease:<BareInput defaultValue="0.00" /></RoundField>
              </SideBody>
            </SidePanel>
            <SideTabs>
              <SideTab $active>Item</SideTab>
              <SideTab>Tool</SideTab>
              <SideTab>View</SideTab>
              <SideTab>BlenderKit</SideTab>
            </SideTabs>
            <LastOperator><Triangle color="#8a8a8a" /><PanelTitle>Move</PanelTitle></LastOperator>
            <TransformTip>D: 3.6 m (3.6 m) along global X</TransformTip>
          </Viewport>

          <Timeline>
            <TimelineHeader>
              <HeaderGroup>
                <DarkButton $width={73} aria-label="Editor type"><ClockIcon size={35} /><Chevron /></DarkButton>
                <MenuPair>
                  <PairButton>Playback<Chevron /></PairButton>
                  <PairButton>Keying<Chevron /></PairButton>
                </MenuPair>
                <PlainMenu>View</PlainMenu>
                <PlainMenu>Marker</PlainMenu>
              </HeaderGroup>
              <Transport>
                <ButtonStrip><StripButton $width={43} aria-label="Record"><RecordIcon /></StripButton></ButtonStrip>
                <ButtonStrip>
                  {transport.map(({ name, Icon }) => <StripButton key={name} aria-label={name}><Icon /></StripButton>)}
                </ButtonStrip>
              </Transport>
              <HeaderGroup $end>
                <CurrentFrame aria-label="Current frame" defaultValue="1" />
                <ButtonStrip>
                  <StripButton $width={44} aria-label="Use preview range"><StopwatchIcon /></StripButton>
                  <FrameField $width={213}>Start:<BareInput defaultValue="1" /></FrameField>
                  <FrameField $width={202}>End:<BareInput defaultValue="250" /></FrameField>
                </ButtonStrip>
              </HeaderGroup>
            </TimelineHeader>
            <Ruler>
              {Array.from({ length: 12 }, (_, i) => <span key={i}>{(i + 1) * 20}</span>)}
              <Playhead>1</Playhead>
            </Ruler>
            <ScrollArea>
              <Svg viewBox="0 0 18 18" $size={18} aria-hidden="true"><path d="M2 10 L8 18 L8 24" {...line} /></Svg>
              <ScrollTrack><Knob /><Knob /></ScrollTrack>
              <Svg viewBox="0 0 22 22" $size={22} aria-hidden="true"><path d="M16 10 L9 18 L13 24" {...line} /></Svg>
            </ScrollArea>
          </Timeline>
        </Column>

        <Column>
          <Outliner>
            <OutlinerHeader $height={63}>
              <DarkButton $width={73} aria-label="Editor type"><TreeIcon size={35} /><Chevron /></DarkButton>
              <DarkButton $width={73} $ml={17} aria-label="Display mode"><LayersIcon size={35} /><Chevron /></DarkButton>
              <SearchBox><SearchIcon size={35} /><BareInput $align="left" aria-label="Search" /></SearchBox>
              <FilterButton aria-label="Filter"><FilterIcon size={35} /></FilterButton>
            </OutlinerHeader>
            <TreeList>
              <TreeRow $indent={55}><BoxIcon size={34} /><TreeName $ml={18}>Scene Collection</TreeName></TreeRow>
              <TreeRow $indent={64}>
                <Triangle open color="#d0d0d0" />
                <TreeCheck>
                  <CheckBox $light type="checkbox" defaultChecked aria-label="Enable collection" />
                </TreeCheck>
                <TreeIconBox $bg="#4c4c4c"><BoxIcon size={34} /></TreeIconBox>
                <TreeName>Collection</TreeName>
                <VisibilityButton aria-label="Hide collection"><EyeIcon size={33} /></VisibilityButton>
              </TreeRow>
              <TreeRow $indent={114} $dim>
                <Branch first />
                <TreeIconBox $color="#8a5f3e"><CameraIcon size={34} /></TreeIconBox>
                <TreeName>Camera</TreeName>
                <TreeIconBox $ml={48} $bg="#646464" $color="#2c9c80"><CameraDataIcon size={34} /></TreeIconBox>
                <VisibilityButton $dim aria-label="Show camera"><EyeClosedIcon size={33} /></VisibilityButton>
              </TreeRow>
              <TreeRow $indent={114} aria-selected="true">
                <Branch bright />
                <TreeIconBox $bg="#6d7da1" $color="#dc9564"><MeshIcon size={34} /></TreeIconBox>
                <TreeName $active>Cube</TreeName>
                <TreeIconBox $ml={48} $bg="#27647f" $color="#06cfa3"><MeshDataIcon size={34} /></TreeIconBox>
                <VisibilityButton aria-label="Hide cube"><EyeIcon size={33} /></VisibilityButton>
              </TreeRow>
              <TreeRow $indent={114} $dim>
                <Branch last />
                <TreeIconBox $color="#8a5f3e"><BulbIcon size={34} /></TreeIconBox>
                <TreeName>Light</TreeName>
                <TreeIconBox $ml={48} $color="#1c8268"><BulbDataIcon size={34} /></TreeIconBox>
                <VisibilityButton $dim aria-label="Show light"><EyeClosedIcon size={33} /></VisibilityButton>
              </TreeRow>
              {[1, 2, 3, 4].map((n) => <TreeRow key={n} $indent={0} aria-hidden="true" />)}
            </TreeList>
          </Outliner>

          <Properties>
            <EditorHeader $height={60}>
              <DarkButton $width={73} aria-label="Editor type"><TogglesIcon size={35} /><Chevron /></DarkButton>
              <HeaderIcon $ml={35} $mr={18}><SceneIcon size={35} /></HeaderIcon>
              <span>Scene</span>
              <Spacer />
              <HeaderIcon $mr={23}><PinIcon size={35} /></HeaderIcon>
            </EditorHeader>
            <PropertiesBody>
              <PropertyTabs>
                {propertyTabs.map(({ name, Icon, color, gap, active }) => (
                  <PropertyTab key={name} $color={color} $gap={gap} $active={active} aria-label={name}>
                    <Icon size={35} />
                  </PropertyTab>
                ))}
              </PropertyTabs>
              <PropertyContent>
                <PanelHeader>
                  <Triangle open />
                  <PanelTitle>Dimensions</PanelTitle>
                  <Spacer />
                  <HeaderIcon $mr={37}><PresetIcon size={35} /></HeaderIcon>
                  <Grip />
                </PanelHeader>
                <PropertySection>
                  <PropGroup $gap={16}>
                    <PropRow><label htmlFor="resx">Resolution X</label><PropInput id="resx" $edge="top" defaultValue="1920 px" /></PropRow>
                    <PropRow><label htmlFor="resy">Y</label><PropInput id="resy" defaultValue="1080 px" /></PropRow>
                    <PropRow><label htmlFor="resp">%</label><PropInput id="resp" $edge="bottom" $blue defaultValue="100%" /></PropRow>
                  </PropGroup>
                  <PropGroup $gap={13}>
                    <PropRow><label htmlFor="aspx">Aspect X</label><PropInput id="aspx" $edge="top" defaultValue="1.000" /></PropRow>
                    <PropRow><label htmlFor="aspy">Y</label><PropInput id="aspy" $edge="bottom" defaultValue="1.000" /></PropRow>
                  </PropGroup>
                  <CheckRow $height={50}>Render Region<CheckBox type="checkbox" /></CheckRow>
                  <CheckRow $height={50} $dim>Crop to Render Region<CheckBox type="checkbox" disabled /></CheckRow>
                  <PropGroup $gap={16} $before={12}>
                    <PropRow><label htmlFor="fstart">Frame Start</label><PropInput id="fstart" $edge="top" defaultValue="1" /></PropRow>
                    <PropRow><label htmlFor="fend">End</label><PropInput id="fend" defaultValue="250" /></PropRow>
                    <PropRow><label htmlFor="fstep">Step</label><PropInput id="fstep" $edge="bottom" defaultValue="1" /></PropRow>
                  </PropGroup>
                  <PropRow $narrow>
                    <label htmlFor="rate">Frame Rate</label>
                    <SelectWrap>
                      <Select id="rate" defaultValue="24 fps"><option>24 fps</option></Select>
                      <SelectArrow><Chevron /></SelectArrow>
                    </SelectWrap>
                  </PropRow>
                  <SubPanel><Triangle />Time Remapping</SubPanel>
                </PropertySection>
                <PanelHeader>
                  <Triangle />
                  <HeaderIcon $ml={21} $mr={-2}><CheckBox type="checkbox" aria-label="Stereoscopy" /></HeaderIcon>
                  <PanelTitle>Stereoscopy</PanelTitle>
                  <Spacer />
                  <Grip />
                </PanelHeader>
                <PanelHeader>
                  <Triangle open />
                  <PanelTitle>Output</PanelTitle>
                  <Spacer />
                  <Grip />
                </PanelHeader>
                <PropertySection>
                  <PathRow>
                    <PathInput aria-label="Output path" defaultValue="/tmp\" />
                    <StripButton $width={48} aria-label="Browse"><FolderIcon size={35} /></StripButton>
                  </PathRow>
                  <CheckRow $height={54}>Overwrite<CheckBox type="checkbox" defaultChecked /></CheckRow>
                  <CheckRow $height={54}>Placeholders<CheckBox type="checkbox" /></CheckRow>
                </PropertySection>
              </PropertyContent>
            </PropertiesBody>
          </Properties>
        </Column>
      </Workspace>

      <StatusBar>
        <MouseHint><MouseBox><Mouse side="left" /></MouseBox><HintText>Confirm</HintText></MouseHint>
        <MouseHint><MouseBox><Mouse side="right" /></MouseBox><HintText>Cancel</HintText></MouseHint>
        {hints.map(({ keys, text }) => (
          <Hint key={text}>
            {keys.map((k, i) => <Key key={i}>{k}</Key>)}
            <HintText>{text}</HintText>
          </Hint>
        ))}
        <Stats>Cube | Verts:4/20 | Edges:4/36 | Faces</Stats>
      </StatusBar>

      <Annotation viewBox="0 0 923 356" aria-hidden="true">
        <ellipse cx="461.500" cy="178" rx="460" ry="176.500" fill="none" stroke="#00ff00" strokeWidth="3" />
      </Annotation>
    </Page>
  );
}
